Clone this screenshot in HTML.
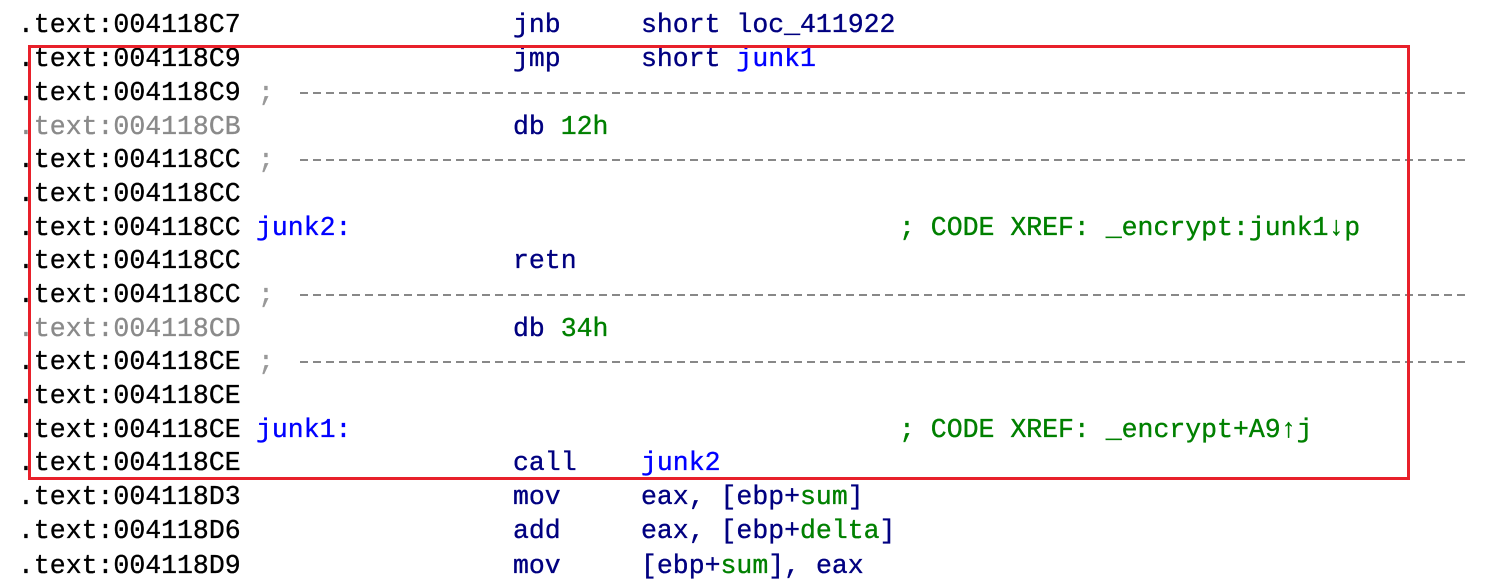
<!DOCTYPE html>
<html><head><meta charset="utf-8"><style>
body{margin:0;width:1485px;height:564px;background:#fff;overflow:hidden;position:relative;font-family:"Liberation Mono",monospace;font-size:26.5px;-webkit-text-stroke:0.35px currentColor;}
.r{position:absolute;left:0;width:1485px;height:34px;line-height:34px;white-space:pre;}
.r span{position:absolute;top:0;}
.a{left:18px;color:#000;}
.g{color:#8a8a8a!important;}
.i{left:513px;color:#000080;}
.o{left:641px;color:#000080;}
.c{left:899px;color:#008000;}
.n{color:#008000;}
.l{left:256px;color:#0000ff;}
.s{left:258px;color:#999;}
.d{position:absolute;left:300px;width:1166px;top:16px;height:2px;background:repeating-linear-gradient(90deg,#888 0 8px,transparent 8px 13px);}
.box{position:absolute;left:28px;top:45px;width:1376px;height:429px;border:3px solid #e8202a;}
</style></head><body>
<div class="r" style="top:8px"><span class="a">.text:004118C7</span><span class="i">jnb</span><span class="o">short loc_411922</span></div>
<div class="r" style="top:42px"><span class="a">.text:004118C9</span><span class="i">jmp</span><span class="o">short <span style="position:static;color:#0000ff">junk1</span></span></div>
<div class="r" style="top:76px"><span class="a">.text:004118C9</span><span class="s">;</span><div class="d"></div></div>
<div class="r" style="top:110px"><span class="a g">.text:004118CB</span><span class="i">db <span class="n" style="position:static">12h</span></span></div>
<div class="r" style="top:143px"><span class="a">.text:004118CC</span><span class="s">;</span><div class="d"></div></div>
<div class="r" style="top:177px"><span class="a">.text:004118CC</span></div>
<div class="r" style="top:211px"><span class="a">.text:004118CC</span><span class="l">junk2:</span><span class="c">; CODE XREF: _encrypt:junk1↓p</span></div>
<div class="r" style="top:244px"><span class="a">.text:004118CC</span><span class="i">retn</span></div>
<div class="r" style="top:278px"><span class="a">.text:004118CC</span><span class="s">;</span><div class="d"></div></div>
<div class="r" style="top:312px"><span class="a g">.text:004118CD</span><span class="i">db <span class="n" style="position:static">34h</span></span></div>
<div class="r" style="top:345px"><span class="a">.text:004118CE</span><span class="s">;</span><div class="d"></div></div>
<div class="r" style="top:379px"><span class="a">.text:004118CE</span></div>
<div class="r" style="top:413px"><span class="a">.text:004118CE</span><span class="l">junk1:</span><span class="c">; CODE XREF: _encrypt+A9↑j</span></div>
<div class="r" style="top:446px"><span class="a">.text:004118CE</span><span class="i">call</span><span class="o" style="color:#0000ff">junk2</span></div>
<div class="r" style="top:480px"><span class="a">.text:004118D3</span><span class="i">mov</span><span class="o">eax, [ebp+<span class="n" style="position:static">sum</span>]</span></div>
<div class="r" style="top:514px"><span class="a">.text:004118D6</span><span class="i">add</span><span class="o">eax, [ebp+<span class="n" style="position:static">delta</span>]</span></div>
<div class="r" style="top:549px"><span class="a">.text:004118D9</span><span class="i">mov</span><span class="o">[ebp+<span class="n" style="position:static">sum</span>], eax</span></div>
<div class="box"></div>
</body></html>
